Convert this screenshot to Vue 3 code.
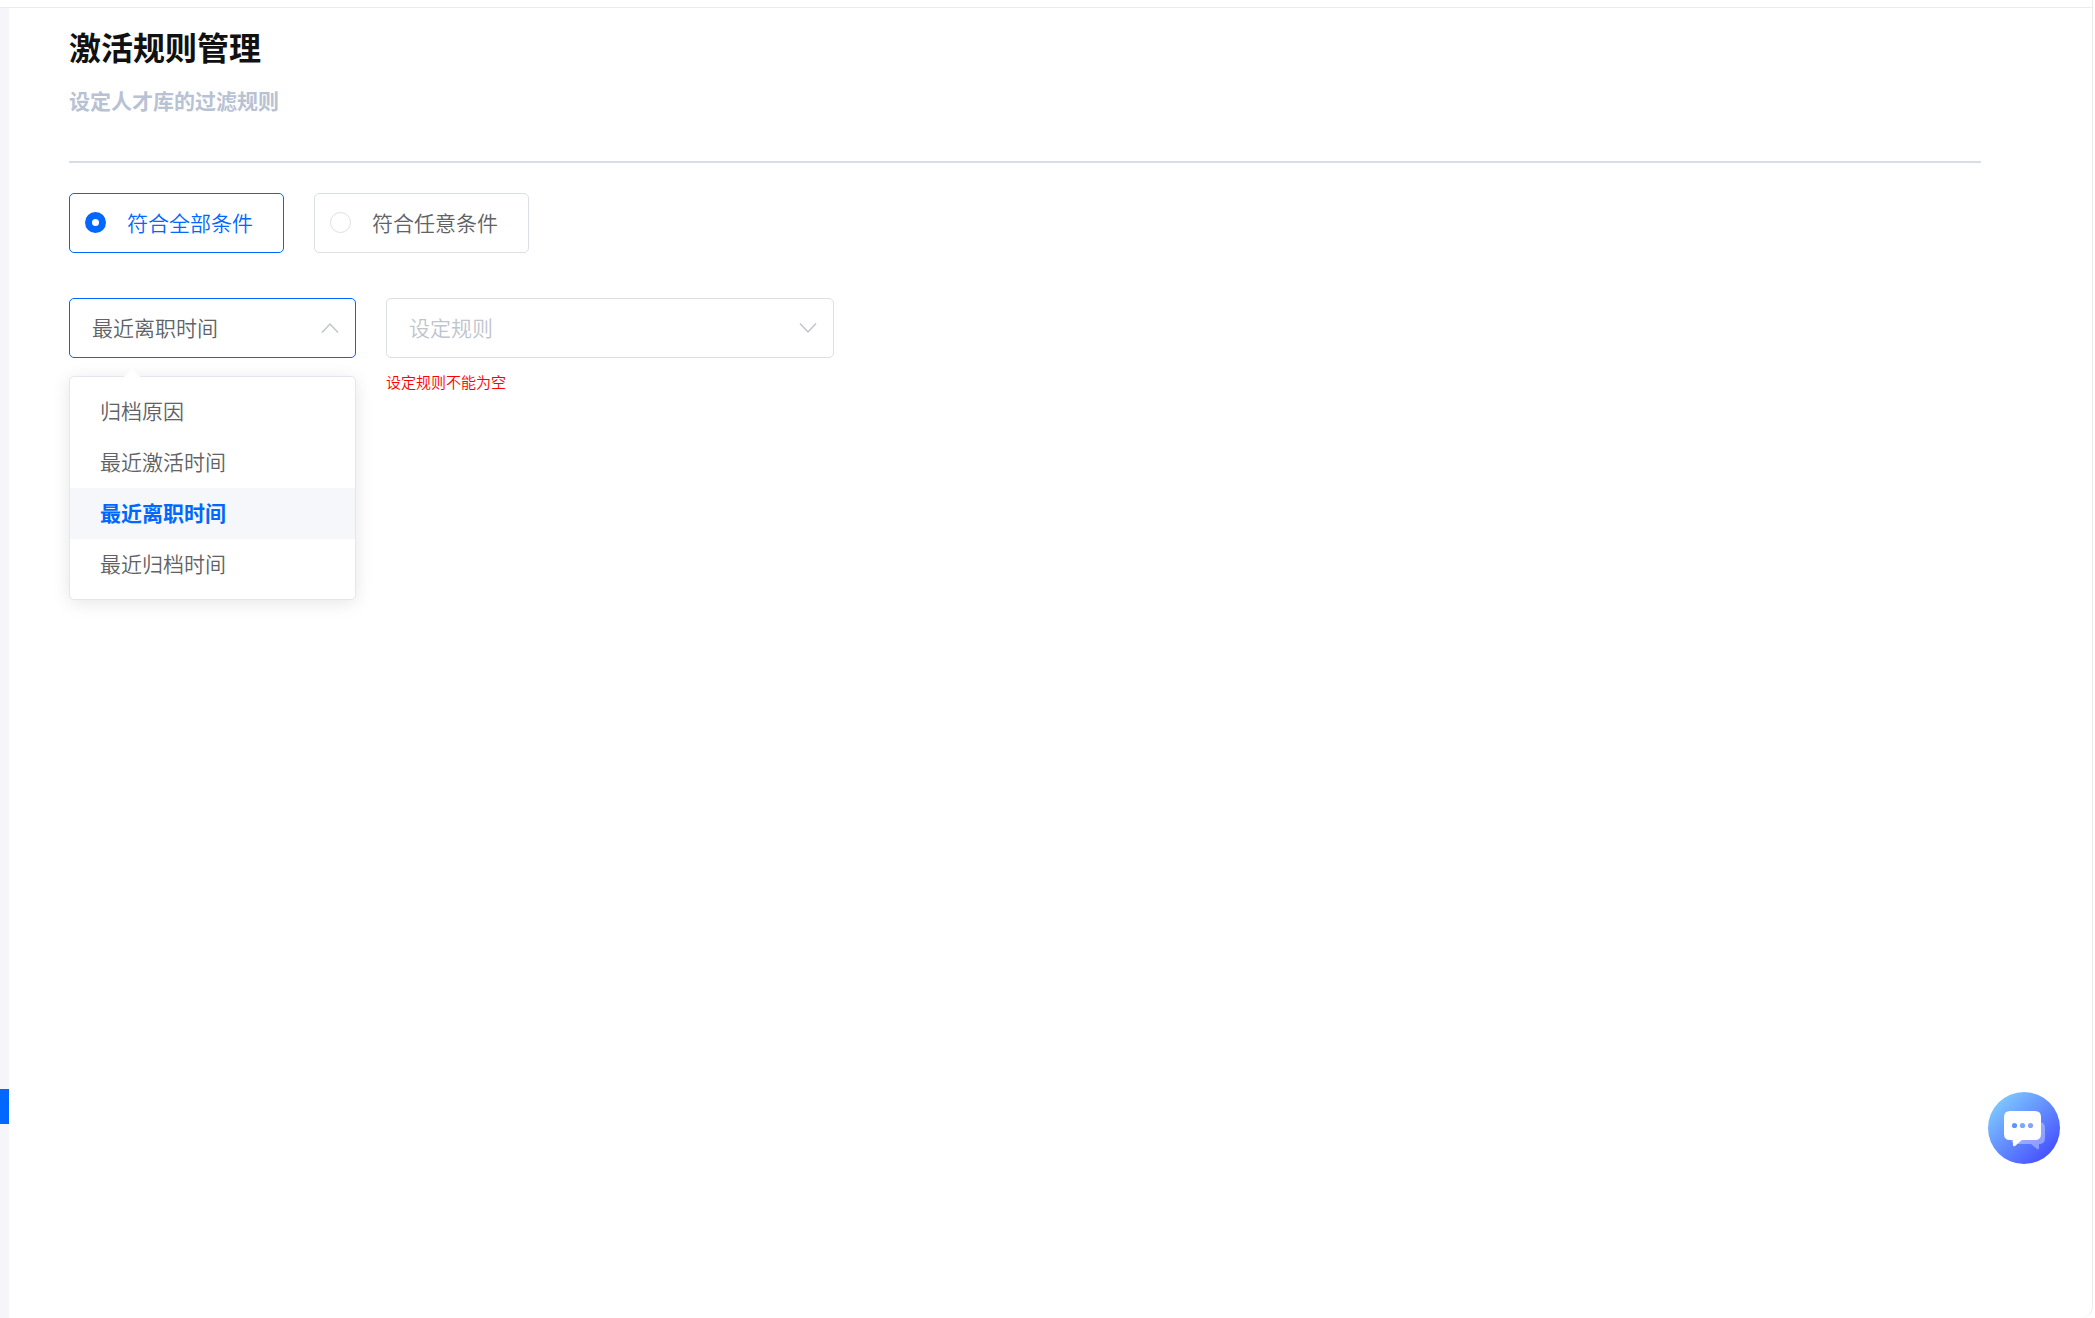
<script setup>
import { ref } from 'vue'

const modes = [
  { value: 'all', label: '符合全部条件' },
  { value: 'any', label: '符合任意条件' }
]
const mode = ref('all')

const fields = ['归档原因', '最近激活时间', '最近离职时间', '最近归档时间']
const field = ref('最近离职时间')
const rule = ref('')
</script>

<template>
  <div class="frame">
    <header class="topbar"></header>
    <div class="body">
      <aside class="rail"><span class="rail-mark"></span></aside>
      <main class="content">
        <div class="heading">
          <h1>激活规则管理</h1>
          <p>设定人才库的过滤规则</p>
        </div>

        <div class="modes">
          <label v-for="m in modes" :key="m.value" class="mode" :class="{ checked: mode === m.value }">
            <input v-model="mode" type="radio" name="mode" :value="m.value" />
            <span>{{ m.label }}</span>
          </label>
        </div>

        <div class="filters">
          <div class="picker field">
            <select v-model="field" class="active" aria-label="条件">
              <option v-for="f in fields" :key="f" :value="f">{{ f }}</option>
            </select>
            <svg class="chevron" viewBox="0 0 18 12" aria-hidden="true"><path d="M1 10.500 9 2l8 8.500" /></svg>
            <div class="menu">
              <ul role="listbox">
                <li
                  v-for="f in fields"
                  :key="f"
                  role="option"
                  :aria-selected="f === field"
                  :class="{ selected: f === field }"
                  @click="field = f"
                >{{ f }}</li>
              </ul>
            </div>
          </div>
          <div class="picker rule">
            <select id="rule" v-model="rule" class="empty" aria-label="规则" aria-describedby="rule-error">
              <option value="">设定规则</option>
            </select>
            <svg class="chevron" viewBox="0 0 18 12" aria-hidden="true"><path d="M1 1.500 9 10l8-8.500" /></svg>
            <p id="rule-error" class="error">设定规则不能为空</p>
          </div>
        </div>
      </main>
    </div>

    <button class="chat" type="button" aria-label="chat">
      <svg viewBox="0 0 72 72" aria-hidden="true">
        <defs>
          <linearGradient id="disc" x1="0.1" y1="0.1" x2="0.85" y2="0.9">
            <stop offset="0" stop-color="#80ccff" />
            <stop offset="1" stop-color="#4650ff" />
          </linearGradient>
        </defs>
        <circle cx="36" cy="36" r="36" fill="url(#disc)" />
        <path d="M30 30h21q6 0 6 6v10q0 6-6 6v4q0 2-2 1l-6-5H28q-5 0-5-5z" fill="#fff" fill-opacity=".35" />
        <path d="M22 19h25q6 0 6 6v17q0 6-6 6H34l-7 6q-2 1-2-1v-5h-3q-6 0-6-6V25q0-6 6-6z" fill="#fff" />
        <circle cx="26.500" cy="33.500" r="2.600" fill="#5b97fa" />
        <circle cx="34.500" cy="33.500" r="2.600" fill="#7da7fa" />
        <circle cx="42.500" cy="33.500" r="2.600" fill="#8ba0fb" />
      </svg>
    </button>
  </div>
</template>

<style>
body {
  margin: 0;
  background: #fff;
}
</style>

<style scoped>
* {
  box-sizing: border-box;
}
.frame {
  display: flex;
  flex-direction: column;
  min-height: 100vh;
  margin-right: 2px;
  border-right: 1px solid #ebebeb;
  border-bottom-right-radius: 12px;
  font-family: "Noto Sans CJK SC", sans-serif;
  font-size: 21px;
  font-weight: 350;
  line-height: 30px;
  color: #606266;
}
.topbar {
  height: 8px;
  border-bottom: 1px solid #ebebeb;
}
.body {
  flex: 1;
  display: flex;
}
.rail {
  width: 9px;
  background: #f5f5fa;
  padding-top: 1081px;
}
.rail-mark {
  display: block;
  height: 35px;
  background: #0067ff;
}
.content {
  flex: 1;
  padding: 14px 111px 60px 60px;
}
.heading {
  padding-bottom: 46px;
  border-bottom: 2px solid #d8dee4;
}
h1,
p,
ul {
  margin: 0;
  padding: 0;
}
h1 {
  font-size: 32px;
  line-height: 48px;
  font-weight: 700;
  color: #111;
}
.heading p {
  margin-top: 15px;
  font-weight: 700;
  color: #b8c2d3;
}
.modes {
  display: flex;
  gap: 30px;
  margin-top: 30px;
}
.mode {
  display: flex;
  align-items: center;
  gap: 21px;
  height: 60px;
  padding: 0 30px 2px 15px;
  border: 1px solid #dcdfe6;
  border-radius: 5px;
  cursor: pointer;
}
.mode.checked {
  border-color: #0067ff;
  color: #0067ff;
}
.mode input {
  appearance: none;
  width: 21px;
  height: 21px;
  margin: 0;
  border: 1px solid #dcdfe6;
  border-radius: 50%;
  background: #fff;
}
.mode input:checked {
  border: 7px solid #0067ff;
}
.filters {
  display: flex;
  align-items: flex-start;
  gap: 30px;
  margin-top: 45px;
}
.picker {
  position: relative;
}
.field {
  width: 287px;
}
.rule {
  width: 448px;
}
select {
  appearance: none;
  display: block;
  width: 100%;
  height: 60px;
  margin: 0;
  padding: 0 45px 2px 22px;
  border: 1px solid #dcdfe6;
  border-radius: 5px;
  background: #fff;
  font: inherit;
  color: #606266;
  outline: none;
}
select.active {
  border-color: #0067ff;
}
select.empty {
  color: #c0c4cc;
}
.chevron {
  position: absolute;
  top: 24px;
  right: 17px;
  width: 18px;
  height: 12px;
  fill: none;
  stroke: #c0c4cc;
  stroke-width: 1.5;
  pointer-events: none;
}
.error {
  margin-top: 13px;
  font-size: 15px;
  line-height: 22px;
  color: #f00;
}
.menu {
  position: absolute;
  top: 78px;
  left: 0;
  width: 100%;
  padding: 9px 0;
  border: 1px solid #e4e7ed;
  border-radius: 5px;
  background: #fff;
  box-shadow: 0 3px 18px rgba(0, 0, 0, 0.1);
}
.menu::before {
  content: "";
  position: absolute;
  top: -9px;
  left: 54px;
  width: 16px;
  height: 9px;
  background: #fff;
  clip-path: polygon(50% 0, 100% 100%, 0 100%);
}
.menu ul {
  list-style: none;
}
.menu li {
  height: 51px;
  padding: 0 30px;
  line-height: 49px;
  cursor: pointer;
}
.menu li.selected {
  background: #f5f7fa;
  font-weight: 700;
  color: #0067ff;
}
.chat {
  position: fixed;
  right: 35px;
  bottom: 154px;
  width: 72px;
  height: 72px;
  padding: 0;
  border: 0;
  border-radius: 50%;
  background: none;
  cursor: pointer;
}
.chat svg {
  display: block;
  width: 72px;
  height: 72px;
}
</style>
